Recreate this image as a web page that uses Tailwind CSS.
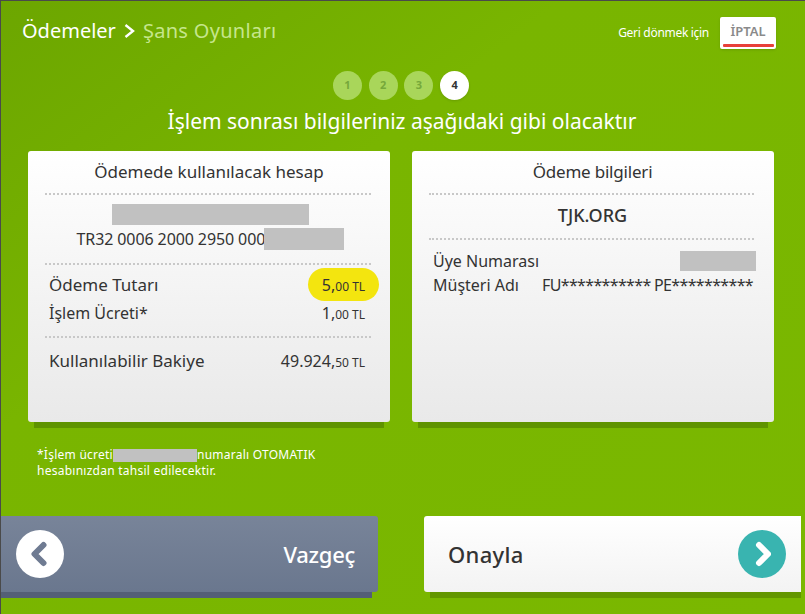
<!DOCTYPE html>
<html lang="tr">
<head>
  <meta charset="UTF-8" />
  <title>Ödemeler</title>
  <script src="https://cdn.jsdelivr.net/npm/@tailwindcss/browser@4"></script>
</head>
<body class="w-[805px] h-[614px] overflow-hidden font-['Noto_Sans',sans-serif] text-[#333]">
  <div class="w-[805px] h-[614px] flex flex-col border-t border-l border-[#4a4a4a] bg-gradient-to-br from-[#6ca600] via-[#79b500] via-35% to-[#7ab800]">

    <!-- Header -->
    <div class="h-[49px] flex items-start justify-between pl-[21px] pr-[29px]">
      <div class="flex items-center h-[30px] mt-[15px] text-[20px]">
        <span class="text-white">Ödemeler</span>
        <svg class="mx-[8px]" width="11" height="16" viewBox="0 0 11 16" fill="none" stroke="white" stroke-width="2.4"><path d="M1.5 2 L9 8 L1.5 14" /></svg>
        <span class="text-[#c6e68c] tracking-[0.3px]">Şans Oyunları</span>
      </div>
      <div class="flex items-center mt-[16px]">
        <span class="text-white text-[12px] tracking-[-0.3px] mr-[11px]">Geri dönmek için</span>
        <div class="w-[56px] h-[32px] bg-white rounded-[2px] flex flex-col items-center shadow-sm">
          <span class="text-[#8a8a8a] text-[13px] font-semibold leading-[28px] h-[27px]">İPTAL</span>
          <span class="w-[51px] h-[3px] bg-[#e8403a] rounded-[1px]"></span>
        </div>
      </div>
    </div>

    <!-- Steps -->
    <div class="flex justify-center gap-[6.7px] mt-[21px] pr-[4px]">
      <div class="w-[29px] h-[29px] rounded-full bg-[#a9d65a] text-[#76a83a] text-[11px] font-bold flex items-center justify-center">1</div>
      <div class="w-[29px] h-[29px] rounded-full bg-[#a9d65a] text-[#76a83a] text-[11px] font-bold flex items-center justify-center">2</div>
      <div class="w-[29px] h-[29px] rounded-full bg-[#a9d65a] text-[#76a83a] text-[11px] font-bold flex items-center justify-center">3</div>
      <div class="w-[29px] h-[29px] rounded-full bg-white text-[#333] text-[11px] font-bold flex items-center justify-center shadow-sm">4</div>
    </div>

    <h1 class="text-white text-[21px] leading-[28px] text-center mt-[7px] pr-[2px]">İşlem sonrası bilgileriniz aşağıdaki gibi olacaktır</h1>

    <!-- Cards -->
    <div class="flex gap-[22px] ml-[27px] mt-[16px]">
      <div class="w-[362px] h-[271px] rounded-[3px] bg-gradient-to-b from-white to-[#e9e9e9] shadow-[0_12px_0_-6px_#5f9300] px-[17px]">
        <div class="text-[17px] leading-[42px] h-[42px] text-center">Ödemede kullanılacak hesap</div>
        <div class="border-t-2 border-dotted border-[#c8c8c8] mr-[2px]"></div>
        <div class="flex flex-col items-center mt-[9px] pl-[2px]">
          <div class="w-[197px] h-[21px] bg-[#c1c1c1]"></div>
          <div class="relative text-[16px] leading-[22px] mt-[3px] w-[267px] tracking-[-0.1px]">TR32 0006 2000 2950 000
            <div class="absolute right-0 top-0 w-[80px] h-[22px] bg-[#c1c1c1]"></div>
          </div>
        </div>
        <div class="border-t-2 border-dotted border-[#c8c8c8] mt-[13px] mr-[2px]"></div>
        <div class="flex items-center justify-between h-[33px] mt-[3px] pl-[4px]">
          <span class="text-[17px]">Ödeme Tutarı</span>
          <span class="h-[33px] w-[71px] rounded-full bg-[#f3e50f] flex items-baseline justify-center pt-[5px] text-[16px] -mr-[6px]">5,<span class="text-[12px]">00 TL</span></span>
        </div>
        <div class="flex items-center justify-between h-[24px] pl-[4px] pr-[8px]">
          <span class="text-[16px]">İşlem Ücreti*</span>
          <span class="text-[16px]">1,<span class="text-[12px]">00 TL</span></span>
        </div>
        <div class="border-t-2 border-dotted border-[#c8c8c8] mt-[11px] mr-[2px]"></div>
        <div class="flex items-center justify-between h-[26px] mt-[10px] pl-[4px] pr-[8px]">
          <span class="text-[17px]">Kullanılabilir Bakiye</span>
          <span class="text-[16px]">49.924,<span class="text-[12px]">50 TL</span></span>
        </div>
      </div>

      <div class="w-[362px] h-[271px] rounded-[3px] bg-gradient-to-b from-white to-[#e9e9e9] shadow-[0_12px_0_-6px_#5f9300] px-[17px]">
        <div class="text-[17px] leading-[42px] h-[42px] text-center tracking-[-0.2px] pr-[1px]">Ödeme bilgileri</div>
        <div class="border-t-2 border-dotted border-[#c8c8c8] mr-[3px]"></div>
        <div class="text-[18px] font-medium leading-[40px] h-[43px] text-center pr-[1px]">TJK.ORG</div>
        <div class="border-t-2 border-dotted border-[#c8c8c8] mr-[3px]"></div>
        <div class="flex items-center justify-between h-[24px] mt-[9px] pl-[4px] pr-[1px]">
          <span class="text-[16px]">Üye Numarası</span>
          <span class="w-[76px] h-[20px] bg-[#c1c1c1]"></span>
        </div>
        <div class="flex items-center justify-between h-[24px] pl-[4px] pr-[4px]">
          <span class="text-[16px]">Müşteri Adı</span>
          <span class="text-[16px] tracking-[-0.65px]">FU*********** PE**********</span>
        </div>
      </div>
    </div>

    <!-- Note -->
    <div class="ml-[36px] mt-[25px] text-white text-[12px] leading-[16px] tracking-[0.25px]">
      <div class="flex items-center">*İşlem ücreti<span class="inline-block w-[84px] h-[13px] bg-[#c1c1c1]"></span>numaralı OTOMATIK</div>
      <div>hesabınızdan tahsil edilecektir.</div>
    </div>

    <!-- Buttons -->
    <div class="flex mt-[37px]">
      <div class="w-[377px] h-[76px] rounded-r-[3px] bg-gradient-to-b from-[#788499] to-[#6a778e] shadow-[-3px_9px_0_-3px_#545f76] flex items-center justify-between pl-[15px] pr-[23px]">
        <div class="w-[48px] h-[48px] rounded-full bg-white flex items-center justify-center">
          <svg width="18" height="26" viewBox="0 0 18 26" fill="none" stroke="#6f7b92" stroke-width="6" stroke-linecap="round" stroke-linejoin="round"><path d="M12.5 4 L3.5 13 L12.5 22" /></svg>
        </div>
        <span class="text-white text-[22px] font-medium tracking-[-0.3px]">Vazgeç</span>
      </div>
      <div class="ml-[46px] w-[377px] h-[76px] rounded-l-[3px] bg-gradient-to-b from-white to-[#f3f3f3] shadow-[3px_9px_0_-3px_#639600] flex items-center justify-between pl-[24px] pr-[15px]">
        <span class="text-[22px] font-medium tracking-[0.3px]">Onayla</span>
        <div class="w-[48px] h-[48px] rounded-full bg-[#39b4b0] flex items-center justify-center">
          <svg width="18" height="26" viewBox="0 0 18 26" fill="none" stroke="white" stroke-width="6" stroke-linecap="round" stroke-linejoin="round"><path d="M6 4 L15 13 L6 22" /></svg>
        </div>
      </div>
    </div>
  </div>
</body>
</html>
